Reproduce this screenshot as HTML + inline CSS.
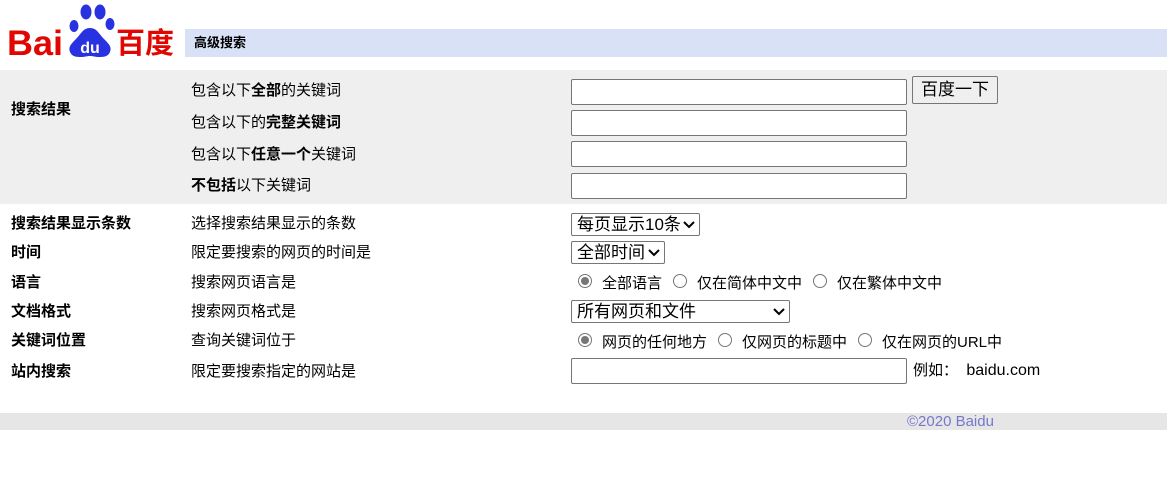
<!DOCTYPE html>
<html><head><meta charset="utf-8"><style>
body{margin:0;width:1167px;height:501px;position:relative;background:#fff;font-family:"Liberation Sans","Noto Sans CJK SC",sans-serif;font-size:15px;color:#000;overflow:hidden}
.a{position:absolute;white-space:nowrap;line-height:18px}
.b{font-weight:bold}
.in{position:absolute;left:571px;width:334px;height:24px;border:1px solid #767676;border-radius:2px;background:#fff}
.sel{position:absolute;left:571px;border:1px solid #767676;border-radius:2px;background:#fff;font-size:17px;line-height:21px;padding-left:5px;box-sizing:border-box}
.sel svg{position:absolute;right:4px;top:7px}
.r{position:absolute;width:12px;height:12px;border:1px solid #767676;border-radius:50%;background:#fff}
.r.on::after{content:"";position:absolute;left:2px;top:2px;width:8px;height:8px;border-radius:50%;background:#777}
</style></head><body>
<svg style="position:absolute;left:0;top:0" width="185" height="62" viewBox="0 0 185 62">
<text x="7" y="55" fill="#e10602" font-family="Liberation Sans" font-weight="bold" font-size="35" textLength="56" lengthAdjust="spacingAndGlyphs">Bai</text>
<g fill="#2932e1"><ellipse cx="86" cy="12" rx="5.5" ry="7.5"/><ellipse cx="100" cy="12" rx="5.5" ry="7.5"/><ellipse cx="110" cy="24" rx="4.5" ry="6"/><ellipse cx="74" cy="26" rx="4.5" ry="6"/>
<path d="M90 28c-7 0-9 6-14 11-5 5-8 8-6 13 2 5 7 5 11 5 4 0 6-1 9-1s5 1 9 1c4 0 9 0 11-5 2-5-1-8-6-13-5-5-7-11-14-11z"/></g>
<text x="90" y="53" text-anchor="middle" fill="#fff" font-family="Liberation Sans" font-weight="bold" font-size="16">du</text>
<text x="116" y="53" fill="#e10602" font-family="Noto Sans CJK SC" font-weight="bold" font-size="29">百度</text>
</svg>
<div style="position:absolute;left:185px;top:29px;width:982px;height:28px;background:#d9e1f7"></div>
<div class="a b" style="left:194px;top:34px;font-size:13px">高级搜索</div>
<div style="position:absolute;left:0;top:70px;width:1167px;height:134px;background:#efefef"></div>
<div class="a b" style="left:11px;top:101px">搜索结果</div>
<div class="a" style="left:191px;top:82px">包含以下<b>全部</b>的关键词</div>
<div class="a" style="left:191px;top:114px">包含以下的<b>完整关键词</b></div>
<div class="a" style="left:191px;top:146px">包含以下<b>任意一个</b>关键词</div>
<div class="a" style="left:191px;top:177px"><b>不包括</b>以下关键词</div>
<div class="in" style="top:79px"></div>
<div class="in" style="top:110px"></div>
<div class="in" style="top:141px"></div>
<div class="in" style="top:173px"></div>
<div style="position:absolute;left:912px;top:76px;width:86px;height:28px;border:1px solid #767676;border-radius:2px;background:#efefef;box-sizing:border-box;font-size:17px;line-height:26px;text-align:center">百度一下</div>
<div class="a b" style="left:11px;top:215px">搜索结果显示条数</div>
<div class="a b" style="left:11px;top:244px">时间</div>
<div class="a b" style="left:11px;top:274px">语言</div>
<div class="a b" style="left:11px;top:303px">文档格式</div>
<div class="a b" style="left:11px;top:332px">关键词位置</div>
<div class="a b" style="left:11px;top:363px">站内搜索</div>
<div class="a" style="left:191px;top:215px">选择搜索结果显示的条数</div>
<div class="a" style="left:191px;top:244px">限定要搜索的网页的时间是</div>
<div class="a" style="left:191px;top:274px">搜索网页语言是</div>
<div class="a" style="left:191px;top:303px">搜索网页格式是</div>
<div class="a" style="left:191px;top:332px">查询关键词位于</div>
<div class="a" style="left:191px;top:363px">限定要搜索指定的网站是</div>
<div class="sel" style="top:213px;width:129px;height:23px">每页显示10条<svg width="12" height="8"><path d="M1 1l5 5 5-5" stroke="#000" stroke-width="2" fill="none"/></svg></div>
<div class="sel" style="top:241px;width:94px;height:23px">全部时间<svg width="12" height="8"><path d="M1 1l5 5 5-5" stroke="#000" stroke-width="2" fill="none"/></svg></div>
<div class="r on" style="left:578px;top:274px"></div>
<div class="a" style="left:602px;top:275px">全部语言</div>
<div class="r" style="left:673px;top:274px"></div>
<div class="a" style="left:697px;top:275px">仅在简体中文中</div>
<div class="r" style="left:813px;top:274px"></div>
<div class="a" style="left:837px;top:275px">仅在繁体中文中</div>
<div class="sel" style="top:300px;width:219px;height:23px">所有网页和文件<svg width="12" height="8"><path d="M1 1l5 5 5-5" stroke="#000" stroke-width="2" fill="none"/></svg></div>
<div class="r on" style="left:578px;top:333px"></div>
<div class="a" style="left:602px;top:334px">网页的任何地方</div>
<div class="r" style="left:718px;top:333px"></div>
<div class="a" style="left:742px;top:334px">仅网页的标题中</div>
<div class="r" style="left:858px;top:333px"></div>
<div class="a" style="left:882px;top:334px">仅在网页的URL中</div>
<div class="in" style="top:358px"></div>
<div class="a" style="left:913px;top:362px;font-size:15px">例如：&nbsp; <span style="font-size:16px">baidu.com</span></div>
<div style="position:absolute;left:0;top:413px;width:1167px;height:17px;background:#e6e6e6"></div>
<div class="a" style="left:907px;top:413px;font-size:15px;line-height:17px;color:#7777cc">©2020 Baidu</div>
</body></html>
